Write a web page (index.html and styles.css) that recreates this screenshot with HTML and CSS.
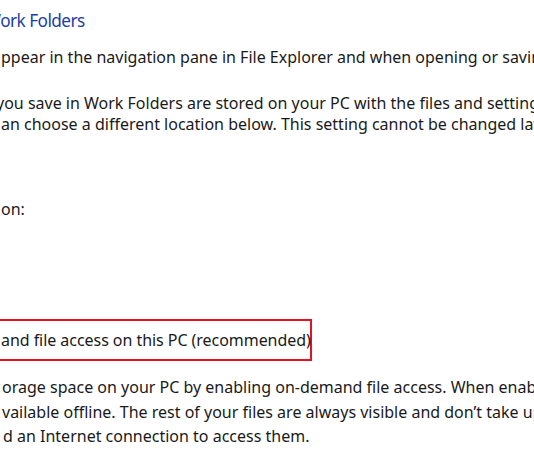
FILE: index.html
```html
<!DOCTYPE html>
<html>
<head>
<meta charset="utf-8">
<link rel="stylesheet" href="styles.css">
</head>
<body>
<div class="page">
  <div class="title"><span class="cut c-title">Work Folders</span></div>
  <div class="line l1"><span class="cut c1">ppear in the navigation pane in File Explorer and when opening or saving files.</span></div>
  <div class="line l2"><span class="cut c2">you save in Work Folders are stored on your PC with the files and settings of other users.</span></div>
  <div class="line"><span class="cut c3">an choose a different location below. This setting cannot be changed later.</span></div>
  <div class="line l4"><span class="cut c4">on:</span></div>
  <div class="check">
    <span class="cut c5">and file access on this PC (recommended)</span>
  </div>
  <div class="para">
    <div class="pline"><span class="cut c6">orage space on your PC by enabling on-demand file access. When enabled,</span></div>
    <div class="pline"><span class="cut c7">vailable offline. The rest of your files are always visible and don’t take up space,</span></div>
    <div class="pline"><span class="cut c8">d an Internet connection to access them.</span></div>
  </div>
</div>
</body>
</html>
```

FILE: styles.css
```css
html, body {
  margin: 0;
  padding: 0;
  background: #ffffff;
  overflow: hidden;
}
.page {
  width: 534px;
  height: 462px;
  overflow: hidden;
  font-family: "Noto Sans", "Open Sans", sans-serif;
  color: #1a1a1a;
  font-size: 16px;
}
.line, .title, .pline, .check {
  white-space: nowrap;
}
.cut {
  display: inline-block;
}
.title {
  color: #1d3da8;
  font-size: 18.5px;
  letter-spacing: -0.6px;
  line-height: 26px;
  margin-top: 7px;
}
.c-title {
  margin-left: -16px;
  transform: scaleX(0.93);
  transform-origin: 16px 50%;
}
.line {
  line-height: 21px;
}
.l1 { margin-top: 14px; }
.l2 { margin-top: 25px; }
.l4 { margin-top: 64px; }
.c1 { margin-left: 1px; }
.c2 { margin-left: -4px; }
.c3 { margin-left: 1px; }
.c4 { margin-left: 1px; }
.check {
  margin-top: 99px;
  margin-left: -10px;
  width: 318px;
  height: 38px;
  border: 2px solid #e81123;
  display: flex;
  align-items: center;
}
.c5 {
  margin-left: 9px;
  letter-spacing: -0.05px;
}
.para {
  margin-top: 14px;
}
.pline {
  line-height: 24.5px;
}
.c6 { margin-left: 2px; }
.c7 { margin-left: 2px; }
.c8 { margin-left: 3px; }
```
